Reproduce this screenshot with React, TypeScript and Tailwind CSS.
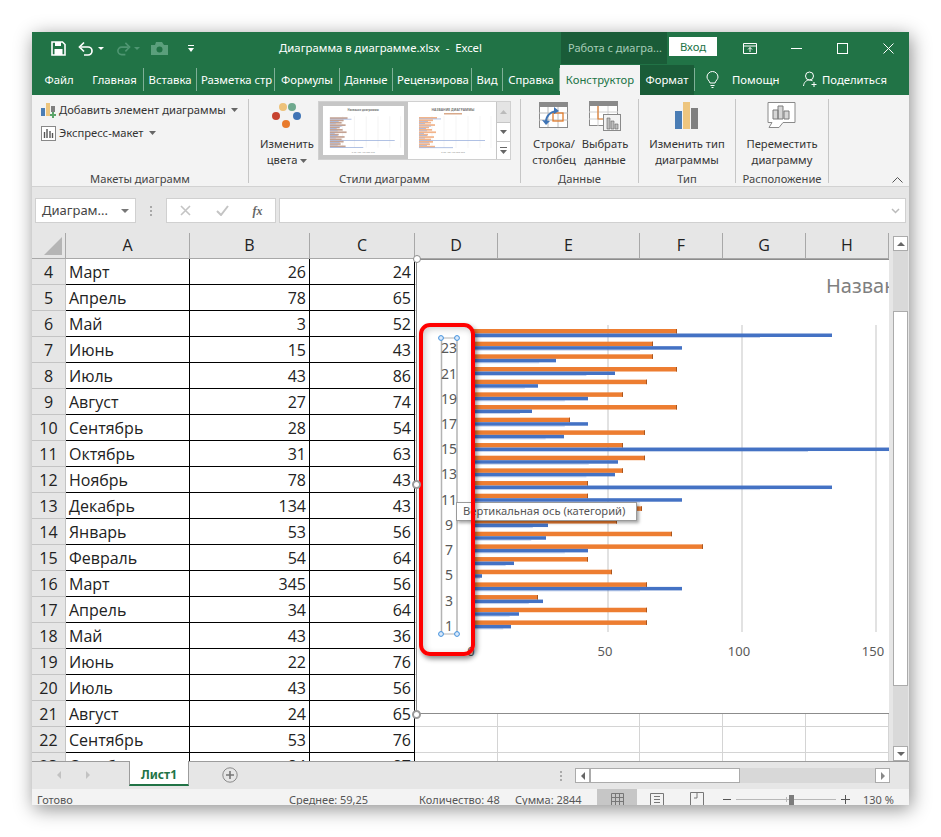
import type { ReactNode } from 'react';

const UI = "font-['Noto_Sans','Open_Sans',sans-serif]";

const tabs = [
  { label: 'Файл', cls: 'w-[54px]' },
  { label: 'Главная', cls: 'w-[58px] border-r' },
  { label: 'Вставка', cls: 'w-[53px] border-r' },
  { label: 'Разметка стр', cls: 'w-[78px] border-r' },
  { label: 'Формулы', cls: 'w-[65px] border-r' },
  { label: 'Данные', cls: 'w-[53px] border-r' },
  { label: 'Рецензирова', cls: 'w-[79px] border-r' },
  { label: 'Вид', cls: 'w-[31px] border-r' },
  { label: 'Справка', cls: 'w-[57px] border-r' },
];

const rows: [number, string, number, number][] = [
  [4, 'Март', 26, 24],
  [5, 'Апрель', 78, 65],
  [6, 'Май', 3, 52],
  [7, 'Июнь', 15, 43],
  [8, 'Июль', 43, 86],
  [9, 'Август', 27, 74],
  [10, 'Сентябрь', 28, 54],
  [11, 'Октябрь', 31, 63],
  [12, 'Ноябрь', 78, 43],
  [13, 'Декабрь', 134, 43],
  [14, 'Январь', 53, 56],
  [15, 'Февраль', 54, 64],
  [16, 'Март', 345, 56],
  [17, 'Апрель', 34, 64],
  [18, 'Май', 43, 36],
  [19, 'Июнь', 22, 76],
  [20, 'Июль', 43, 56],
  [21, 'Август', 24, 65],
  [22, 'Сентябрь', 53, 76],
  [23, 'Октябрь', 84, 87],
];

// bar ends in page px, top category first: [orange, blue]
const bars: [number, number][] = [
  [677, 832], [653, 682], [653, 556], [677, 615], [647, 538], [623, 588],
  [677, 532], [570, 588], [645, 564], [623, 892], [645, 618], [623, 615],
  [588, 832], [588, 682], [642, 560], [617, 548], [672, 546], [703, 588],
  [588, 514], [612, 482], [647, 682], [538, 543], [647, 519], [647, 511],
];

const axisLabels: [string, number][] = [
  ['23', 353], ['21', 379], ['19', 404], ['17', 429], ['15', 454], ['13', 479],
  ['11', 505], ['9', 530], ['7', 555], ['5', 580], ['3', 606], ['1', 631],
];

function Caret({ className = '' }: { className?: string }) {
  return (
    <svg className={`inline-block w-[7px] h-[4px] ${className}`} viewBox="0 0 7 4">
      <path d="M0 0h7L3.5 4z" fill="#666" />
    </svg>
  );
}

function Group({ cls, label, children }: { cls: string; label: string; children: ReactNode }) {
  return (
    <div className={`${cls} h-[84px] shrink-0 flex flex-col border-r border-[#c6c6c6]`}>
      <div className="flex-1 min-h-0 flex">{children}</div>
      <div className="h-[15px] -mb-[3px] text-center text-[11.2px] leading-[15px] text-[#444] whitespace-nowrap">{label}</div>
    </div>
  );
}

function BigButton({ cls, icon, lines }: { cls: string; icon: ReactNode; lines: ReactNode[] }) {
  return (
    <div className={`${cls} flex flex-col items-center`}>
      <div className="h-[33px] flex items-center justify-center">{icon}</div>
      <div className="mt-[4px] text-center text-[11.2px] leading-[16px] text-[#333] whitespace-nowrap">
        {lines.map((l, i) => (
          <div key={i}>{l}</div>
        ))}
      </div>
    </div>
  );
}

function MiniChart({ legend }: { legend: boolean }) {
  const ys = Array.from({ length: 13 }, (_, i) => i);
  const o = [18, 14, 12, 16, 10, 13, 17, 9, 15, 12, 14, 11, 16];
  const b = [22, 9, 6, 12, 7, 8, 5, 8, 6, 66, 10, 8, 34];
  return (
    <svg width="82" height="50" viewBox="0 0 82 50">
      <rect width="82" height="50" fill="#fff" />
      <text x="41" y="5" fontSize={legend ? 3.4 : 2.8} textAnchor="middle" fontWeight="700" fill="#777">
        {legend ? 'НАЗВАНИЕ ДИАГРАММЫ' : 'Название диаграммы'}
      </text>
      {legend && <rect x="32" y="7" width="18" height="1.5" fill="#d9a98a" />}
      {[20, 32, 44, 56, 68, 79].map((x) => (
        <line key={x} x1={x} x2={x} y1="10" y2="42" stroke="#e8e8e8" strokeWidth="0.5" />
      ))}
      {ys.map((i) => (
        <g key={i}>
          <rect x="7" y={11 + i * 2.4} width={o[i]} height="1.7" fill={legend ? '#f2b48a' : '#c4a292'} />
          <rect x="7" y={12.6 + i * 2.4} width={b[i]} height="0.7" fill="#8ea6d8" />
        </g>
      ))}
      <text x="41" y="47" fontSize="2.4" textAnchor="middle" fill="#999">
        0 50 100 150 200 250
      </text>
    </svg>
  );
}

function Ribbon() {
  return (
    <div className="h-[92px] shrink-0 bg-[#f3f3f3] border-b border-[#d2d2d2] pt-[4px] flex relative">
      <Group cls="w-[217px]" label="Макеты диаграмм">
        <div className="pl-[9px] text-[11.2px] text-[#333]">
          <div className="h-[22px] flex items-center gap-[3px]">
            <svg width="15" height="15" viewBox="0 0 15 15">
              <rect x="0" y="5" width="4" height="8" fill="#4a7db5" />
              <rect x="5" y="0" width="4" height="13" fill="#ecc57e" />
              <rect x="10" y="3" width="4" height="6" fill="#7f7f7f" />
              <path d="M11 9h2v2h2v2h-2v2h-2v-2H9v-2h2z" fill="#5aa469" />
            </svg>
            <span>Добавить элемент диаграммы</span>
            <Caret className="ml-[2px]" />
          </div>
          <div className="h-[24px] flex items-center gap-[3px]">
            <svg width="15" height="15" viewBox="0 0 15 15">
              <rect x="0.5" y="0.5" width="14" height="14" fill="#fff" stroke="#888" />
              <path d="M3.5 12V6M6 12V3M9 12V5M11.5 12V7" stroke="#555" strokeWidth="1.4" />
            </svg>
            <span>Экспресс-макет</span>
            <Caret className="ml-[2px]" />
          </div>
        </div>
      </Group>
      <Group cls="w-[272px]" label="Стили диаграмм">
        <BigButton
          cls="w-[69px] pl-[7px]"
          icon={
            <svg width="30" height="28" viewBox="0 0 30 28">
              <circle cx="11" cy="5" r="4" fill="#edc27a" />
              <circle cx="20" cy="5" r="4" fill="#6fa98e" />
              <circle cx="4" cy="14" r="4" fill="#c7432f" />
              <circle cx="25" cy="14" r="4" fill="#3f74b5" />
              <circle cx="14" cy="22" r="4" fill="#e87a2c" />
            </svg>
          }
          lines={[
            'Изменить',
            <span key="c">
              цвета <Caret />
            </span>,
          ]}
        />
        <div className="w-[193px] h-[59px] mt-[2px] bg-white border border-[#d0d0d0] flex">
          <div className="w-[89px] h-[57px] border-[4px] border-[#c6c6c6] overflow-hidden flex items-center justify-center">
            <MiniChart legend={false} />
          </div>
          <div className="w-[86px] ml-[3px] h-[57px] overflow-hidden flex items-center justify-center">
            <MiniChart legend={true} />
          </div>
          <div className="w-[14px] ml-auto flex flex-col border-l border-[#c6c6c6] bg-white">
            <div className="h-[21px] bg-[#e4e4e4] border-b border-[#c6c6c6] flex items-center justify-center">
              <svg width="7" height="4" viewBox="0 0 7 4"><path d="M0 4h7L3.5 0z" fill="#bbb" /></svg>
            </div>
            <div className="h-[19px] border-b border-[#c6c6c6] flex items-center justify-center">
              <Caret />
            </div>
            <div className="flex-1 flex flex-col items-center justify-center gap-[2px]">
              <div className="w-[7px] h-px bg-[#666]" />
              <Caret />
            </div>
          </div>
        </div>
      </Group>
      <Group cls="w-[118px]" label="Данные">
        <BigButton
          cls="w-[63px] pl-[3px]"
          icon={
            <svg width="30" height="28" viewBox="0 0 30 28">
              <rect x="0.5" y="0.5" width="28" height="25" fill="#fff" stroke="#8a8a8a" />
              <rect x="0" y="0" width="29" height="5" fill="#8a8a8a" />
              <path d="M0 11h29M0 18h29M9 5v20M19 5v20" stroke="#bcbcbc" />
              <rect x="14" y="11" width="10" height="8" fill="none" stroke="#e07b2b" strokeWidth="1.3" />
              <path d="M7 20c0-6 4-10 10-11" fill="none" stroke="#3f74b5" strokeWidth="2" />
              <path d="M15 5l5 4-5 3zM3 18l4 5 4-4z" fill="#3f74b5" />
            </svg>
          }
          lines={['Строка/', 'столбец']}
        />
        <BigButton
          cls="w-[42px]"
          icon={
            <svg width="32" height="30" viewBox="0 0 32 30">
              <rect x="0.5" y="0.5" width="28" height="24" fill="#fff" stroke="#8a8a8a" />
              <rect x="0" y="0" width="29" height="5" fill="#8a8a8a" />
              <path d="M0 11h29M0 18h29M9 5v20M19 5v20" stroke="#d0d0d0" />
              <path d="M9 5v13h10" fill="none" stroke="#e07b2b" strokeWidth="1.2" />
              <rect x="14.5" y="13.5" width="17" height="16" fill="#f3f3f3" stroke="#8a8a8a" />
              <path d="M18 17v11h3V17zM22 20v8h3v-8zM26 23v5h3v-5z" fill="#bdbdbd" stroke="#666" strokeWidth="0.6" />
            </svg>
          }
          lines={['Выбрать', 'данные']}
        />
      </Group>
      <Group cls="w-[97px]" label="Тип">
        <BigButton
          cls="w-full"
          icon={
            <svg width="24" height="28" viewBox="0 0 24 28">
              <rect x="0" y="9" width="7" height="18" fill="#4a7db5" />
              <rect x="8" y="0" width="7" height="27" fill="#edc57e" />
              <rect x="16" y="6" width="7" height="21" fill="#7f7f7f" />
            </svg>
          }
          lines={['Изменить тип', 'диаграммы']}
        />
      </Group>
      <Group cls="w-[93px]" label="Расположение">
        <BigButton
          cls="w-full"
          icon={
            <svg width="30" height="27" viewBox="0 0 30 27">
              <path d="M1 .5h27v20H16l-4 5H2l3-5H1z" fill="#fff" stroke="#8a8a8a" />
              <path d="M6 17V8h5v9zM11 17V4h5v13zM17 17V9h5v8z" fill="#d6d6d6" stroke="#7a7a7a" />
            </svg>
          }
          lines={['Переместить', 'диаграмму']}
        />
      </Group>
      <svg className="absolute right-[6px] bottom-[3px]" width="11" height="6" viewBox="0 0 11 6">
        <path d="M.5 5.5l5-5 5 5" fill="none" stroke="#555" />
      </svg>
    </div>
  );
}

function FormulaBar() {
  return (
    <div className="h-[46px] shrink-0 bg-[#e6e6e6] pt-[11px] flex items-start">
      <div className="ml-[3px] w-[101px] h-[25px] bg-white border border-[#d0d0d0] flex items-center pl-[6px] text-[13px] text-[#444]">
        <span>Диаграм...</span>
        <svg className="ml-auto mr-[6px]" width="8" height="4" viewBox="0 0 8 4"><path d="M0 0h8L4 4z" fill="#777" /></svg>
      </div>
      <div className="w-[30px] h-[25px] flex flex-col items-center justify-center gap-[2px]">
        <div className="w-[2px] h-[2px] bg-[#a8a8a8]" />
        <div className="w-[2px] h-[2px] bg-[#a8a8a8]" />
        <div className="w-[2px] h-[2px] bg-[#a8a8a8]" />
      </div>
      <div className="w-[110px] h-[25px] bg-white border border-[#d0d0d0] flex items-center">
        <div className="w-[37px] flex justify-center">
          <svg width="11" height="11" viewBox="0 0 11 11"><path d="M1 1l9 9M10 1l-9 9" stroke="#c4c4c4" strokeWidth="1.6" /></svg>
        </div>
        <div className="w-[36px] flex justify-center">
          <svg width="13" height="11" viewBox="0 0 13 11"><path d="M1 6l4 4 7-9" fill="none" stroke="#c4c4c4" strokeWidth="2" /></svg>
        </div>
        <div className="w-[35px] text-center text-[12px] italic font-bold text-[#666] font-['Liberation_Serif',serif]">fx</div>
      </div>
      <div className="ml-[3px] w-[627px] h-[25px] bg-white border border-[#d0d0d0] flex items-center justify-end pr-[5px]">
        <svg width="9" height="6" viewBox="0 0 9 6"><path d="M1 1l3.500 3.500L8 1" fill="none" stroke="#bbb" strokeWidth="1.5" /></svg>
      </div>
    </div>
  );
}

function Chart() {
  return (
    <div className="absolute left-[384px] top-[26px] w-[473px] h-[455px] bg-white">
      <svg className="block" width="473" height="455" viewBox="416 259 473 455">
        <rect x="416.5" y="259.5" width="480" height="454" fill="#fff" stroke="#8c8c8c" />
        <text x="826" y="293" fontSize="20" fill="#7f7f7f">
          Название
        </text>
        {[608, 742, 876].map((x) => (
          <line key={x} x1={x} x2={x} y1="325" y2="632" stroke="#d9d9d9" strokeWidth="1.5" />
        ))}
        {bars.map(([o, b], i) => (
          <g key={i}>
            <rect x="472" y={329 + i * 12.67} width={o - 472} height="4.5" fill="#ed7d31" />
            <rect x={o - 1} y={329 + i * 12.67} width="1" height="4.5" fill="#a9561f" />
            <rect x="472" y={333.5 + i * 12.67} width={b - 472} height="3.5" fill="#4472c4" />
            <rect x="472" y={337 + i * 12.67} width={(b - 472) * 0.8} height="1" fill="#4472c4" opacity="0.3" />
          </g>
        ))}
        <line x1="441.5" x2="441.5" y1="338" y2="634" stroke="#b3b3b3" strokeWidth="1.5" />
        <line x1="457" x2="457" y1="338" y2="634" stroke="#b3b3b3" strokeWidth="1.5" />
        <line x1="441" x2="457" y1="338" y2="338" stroke="#b3b3b3" />
        <line x1="441" x2="457" y1="634" y2="634" stroke="#b3b3b3" />
        {axisLabels.map(([t, y]) => (
          <text key={t} x="449" y={y} fontSize="14" textAnchor="middle" fill="#595959">
            {t}
          </text>
        ))}
        {[[441, 338], [457, 338], [441, 634], [457, 634]].map(([x, y]) => (
          <circle key={`${x}-${y}`} cx={x} cy={y} r="2.4" fill="#dbeafb" stroke="#3f8fdc" strokeWidth="1" />
        ))}
        <text x="471" y="656" fontSize="13" textAnchor="middle" fill="#595959">0</text>
        <text x="605" y="656" fontSize="13" textAnchor="middle" fill="#595959">50</text>
        <text x="739" y="656" fontSize="13" textAnchor="middle" fill="#595959">100</text>
        <text x="873" y="656" fontSize="13" textAnchor="middle" fill="#595959">150</text>
      </svg>
      <div className="absolute left-[40px] top-[243px] w-[181px] h-[19px] bg-white border border-[#9a9a9a] shadow-[2px_2px_3px_rgba(0,0,0,0.35)] flex items-center pl-[6px] text-[11.2px] text-[#555] whitespace-nowrap">
        Вертикальная ось (категорий)
      </div>
      {/* red callout over the axis, sits above the tooltip */}
      <div className="absolute left-[3px] top-[64px] w-[56px] h-[333px] border-[4px] border-[#f00] rounded-[11px] shadow-[2px_3px_5px_rgba(0,0,0,0.45),inset_2px_2px_6px_rgba(0,0,0,0.2)]" />
    </div>
  );
}

function Sheet() {
  const headers = ['A', 'B', 'C', 'D', 'E', 'F', 'G', 'H'];
  return (
    <div className="flex-1 min-h-0 flex bg-[#e6e6e6]">
      <div className="w-[857px] relative overflow-hidden bg-white">
        <div className="grid grid-cols-[34px_124px_120px_105px_83px_142px_83px_83px_83px] auto-rows-[26px] font-['Open_Sans',sans-serif] text-[16px] leading-[27px] text-[#222]">
          <div className="bg-[#e6e6e6] border-r border-b border-[#a8a8a8] flex items-end justify-end pr-[3px] pb-[3px]">
            <svg width="18" height="18" viewBox="0 0 18 18"><path d="M18 0v18H0z" fill="#b5b5b5" /></svg>
          </div>
          {headers.map((h) => (
            <div key={h} className="bg-[#e6e6e6] border-r border-b border-[#a8a8a8] text-center leading-[25px]">
              {h}
            </div>
          ))}
          {rows.map(([n, name, b, c]) => (
            <div key={n} className="contents">
              <div className="bg-[#e6e6e6] border-r border-b border-[#c4c4c4] text-center">{n}</div>
              <div className="border-r border-b border-black pl-[3px]">{name}</div>
              <div className="border-r border-b border-black text-right pr-[3px]">{b}</div>
              <div className="border-r border-b border-black text-right pr-[3px]">{c}</div>
              <div className="border-r border-b border-[#d4d4d4]" />
              <div className="border-r border-b border-[#d4d4d4]" />
              <div className="border-r border-b border-[#d4d4d4]" />
              <div className="border-r border-b border-[#d4d4d4]" />
              <div className="border-r border-b border-[#d4d4d4]" />
            </div>
          ))}
        </div>
        <Chart />
        <div className="absolute left-[381px] top-[22px] w-[8px] h-[8px] rounded-full bg-white border border-[#8c8c8c]" />
        <div className="absolute left-[380px] top-[247px] w-[9px] h-[9px] rounded-full bg-white border-2 border-[#9a9a9a]" />
        <div className="absolute left-[380px] top-[477px] w-[9px] h-[9px] rounded-full bg-white border-2 border-[#9a9a9a]" />
      </div>
      <div className="w-[20px] pl-[4px] pr-[1px] pt-[3px]">
        <div className="h-full bg-[#d9d9d9] flex flex-col">
          <div className="h-[15px] bg-white border border-[#ababab] flex items-center justify-center">
            <svg width="8" height="4" viewBox="0 0 8 4"><path d="M0 4h8L4 0z" fill="#666" /></svg>
          </div>
          <div className="mt-[60px] h-[375px] bg-white border border-[#ababab]" />
          <div className="flex-1" />
          <div className="h-[15px] bg-white border border-[#ababab] flex items-center justify-center">
            <svg width="8" height="4" viewBox="0 0 8 4"><path d="M0 0h8L4 4z" fill="#666" /></svg>
          </div>
        </div>
      </div>
    </div>
  );
}

function TabBar() {
  return (
    <div className="h-[28px] shrink-0 bg-[#e6e6e6] border-t border-[#9c9c9c] flex items-start relative">
      <div className="w-[97px] h-[26px] flex items-center gap-[25px] pl-[25px]">
        <svg width="4" height="8" viewBox="0 0 4 8"><path d="M4 0v8L0 4z" fill="#c2c2c2" /></svg>
        <svg width="4" height="8" viewBox="0 0 4 8"><path d="M0 0v8l4-4z" fill="#c2c2c2" /></svg>
      </div>
      <div className="w-[60px] h-[25px] -mt-px bg-white border-x border-[#9c9c9c] border-b-[2px] border-b-[#217346] text-center text-[12px] leading-[27px] font-bold text-[#217346]">
        Лист1
      </div>
      <div className="ml-[33px] mt-[5px]">
        <svg width="16" height="16" viewBox="0 0 16 16">
          <circle cx="8" cy="8" r="7.2" fill="none" stroke="#8a8a8a" />
          <path d="M8 4v8M4 8h8" stroke="#777" strokeWidth="1.6" />
        </svg>
      </div>
      <div className="ml-auto mr-[19px] mt-[6px] flex items-center gap-[13px]">
        <div className="flex flex-col gap-[2px]">
          <div className="w-[2px] h-[2px] bg-[#aaa]" />
          <div className="w-[2px] h-[2px] bg-[#aaa]" />
          <div className="w-[2px] h-[2px] bg-[#aaa]" />
        </div>
        <div className="w-[315px] h-[15px] bg-[#d8d8d8] flex">
          <div className="w-[15px] bg-white border border-[#ababab] flex items-center justify-center">
            <svg width="4" height="8" viewBox="0 0 4 8"><path d="M4 0v8L0 4z" fill="#666" /></svg>
          </div>
          <div className="w-[150px] bg-white border border-[#ababab]" />
          <div className="flex-1" />
          <div className="w-[15px] bg-white border border-[#ababab] flex items-center justify-center">
            <svg width="4" height="8" viewBox="0 0 4 8"><path d="M0 0v8l4-4z" fill="#888" /></svg>
          </div>
        </div>
      </div>
    </div>
  );
}

function StatusBar() {
  return (
    <div className="h-[16px] shrink-0 bg-[#f3f3f3] flex items-start text-[11px] leading-[16px] text-[#555] whitespace-nowrap overflow-hidden">
      <span className="mt-[3px] ml-[5px] w-[252px]">Готово</span>
      <span className="mt-[3px] w-[130px]">Среднее: 59,25</span>
      <span className="mt-[3px] w-[96px]">Количество: 48</span>
      <span className="mt-[3px] w-[82px]">Сумма: 2844</span>
      <div className="w-[40px] h-[16px] bg-[#c6c6c6] flex justify-center pt-[4px]">
        <svg width="13" height="13" viewBox="0 0 13 13">
          <path d="M.5.5h12v12H.5zM4.5.5v12M8.5.5v12M.5 4.500h12M.5 8.500h12" fill="none" stroke="#777" />
        </svg>
      </div>
      <div className="w-[40px] flex justify-center pt-[4px]">
        <svg width="14" height="13" viewBox="0 0 14 13">
          <path d="M.5.5h13v12H.5zM4 3.500h6M4 6.500h6M4 9.500h6" fill="none" stroke="#777" />
        </svg>
      </div>
      <div className="w-[40px] flex justify-center pt-[3px]">
        <svg width="14" height="13" viewBox="0 0 14 13">
          <path d="M.5 13V.5h13V13M7 .5V6H4" fill="none" stroke="#777" />
        </svg>
      </div>
      <svg className="ml-[6px] mt-[10px]" width="8" height="1" viewBox="0 0 8 1"><rect width="8" height="1" fill="#555" /></svg>
      <div className="ml-[5px] w-[100px] h-[16px] relative">
        <div className="absolute left-0 top-[10px] w-full h-px bg-[#b8b8b8]" />
        <div className="absolute left-[50px] top-[8px] w-px h-[5px] bg-[#b8b8b8]" />
        <div className="absolute left-[53px] top-[6px] w-[5px] h-[10px] bg-[#7c7c7c]" />
      </div>
      <svg className="ml-[5px] mt-[6px]" width="9" height="9" viewBox="0 0 9 9"><path d="M4.500 0v9M0 4.500h9" stroke="#555" /></svg>
      <span className="mt-[3px] ml-[13px]">130 %</span>
    </div>
  );
}

export default function App() {
  return (
    <div className={`w-[941px] h-[837px] bg-white pt-[32px] pl-[32px] ${UI}`}>
      <div className="w-[877px] h-[773px] flex flex-col shadow-[2px_4px_18px_rgba(0,0,0,0.45)] bg-[#217346]">
        {/* title bar */}
        <div className="h-[32px] shrink-0 flex items-center text-white">
          <div className="w-[229px] flex items-center pl-[19px]">
            <svg width="15" height="15" viewBox="0 0 15 15">
              <path d="M1 1h10.500L14 3.500V14H1z" fill="none" stroke="#fff" strokeWidth="1.6" />
              <rect x="4" y="1" width="6" height="4" fill="#fff" />
              <rect x="3.5" y="8" width="8" height="6" fill="#fff" />
            </svg>
            <svg className="ml-[12px]" width="16" height="15" viewBox="0 0 16 15">
              <path d="M3 6h7a4 4 0 0 1 0 8H6" fill="none" stroke="#fff" strokeWidth="1.7" />
              <path d="M6 1.500L1.500 6 6 10.500" fill="none" stroke="#fff" strokeWidth="1.7" />
            </svg>
            <svg className="ml-[4px]" width="6" height="3" viewBox="0 0 6 3"><path d="M0 0h6L3 3z" fill="#fff" /></svg>
            <svg className="ml-[12px]" width="15" height="15" viewBox="0 0 16 15">
              <path d="M13 6H6a4 4 0 0 0 0 8h4" fill="none" stroke="#4f9672" strokeWidth="1.7" />
              <path d="M10 1.500L14.500 6 10 10.500" fill="none" stroke="#4f9672" strokeWidth="1.7" />
            </svg>
            <svg className="ml-[3px]" width="6" height="3" viewBox="0 0 6 3"><path d="M0 0h6L3 3z" fill="#4f9672" /></svg>
            <svg className="ml-[11px]" width="17" height="13" viewBox="0 0 17 13">
              <path d="M0 3h4l1-3h6l2 3h4v10H0z" fill="#5b9f7c" />
              <circle cx="8.5" cy="7.5" r="3" fill="#217346" />
            </svg>
            <svg className="ml-[20px]" width="6" height="7" viewBox="0 0 6 7"><path d="M0 0h6v1H0zM0 3h6L3 7z" fill="#fff" /></svg>
          </div>
          <div className="w-[239px] text-center text-[11.3px] whitespace-nowrap">Диаграмма в диаграмме.xlsx&nbsp; -&nbsp; Excel</div>
          <div className="w-[61px]" />
          <div className="w-[106px] h-[32px] bg-[#1a5c38] text-[#a8cdb8] text-[11px] leading-[32px] pl-[7px] whitespace-nowrap overflow-hidden">Работа с диагра...</div>
          <div className="ml-[2px] mb-[3px] w-[48px] h-[19px] bg-white text-[#217346] text-[11.3px] leading-[19px] text-center">Вход</div>
          <div className="w-[65px] flex justify-center">
            <svg width="14" height="11" viewBox="0 0 14 11">
              <path d="M.5.5h13v10H.5zM.5 3h13M7 9V4.500M5 6.500l2-2 2 2" fill="none" stroke="#fff" />
            </svg>
          </div>
          <div className="w-[28px] flex justify-center">
            <div className="w-[11px] h-px bg-white" />
          </div>
          <div className="w-[64px] flex justify-center">
            <div className="w-[11px] h-[11px] border border-white" />
          </div>
          <div className="w-[28px] flex justify-center">
            <svg width="11" height="11" viewBox="0 0 11 11"><path d="M.5.5l10 10M10.500.5l-10 10" stroke="#fff" /></svg>
          </div>
        </div>
        {/* tabs */}
        <div className="h-[31px] shrink-0 flex text-white text-[11.3px] whitespace-nowrap">
          {tabs.map((t) => (
            <div key={t.label} className={`${t.cls} mt-[4px] h-[23px] leading-[24px] text-center overflow-hidden px-[4px] border-[#7fb097]`}>
              {t.label}
            </div>
          ))}
          <div className="w-[80px] h-[30px] mt-[1px] bg-[#f3f3f3] text-[#217346] text-center leading-[29px]">Конструктор</div>
          <div className="w-[54px] h-[30px] mt-[1px] bg-[#1a5c38] text-center leading-[29px]">Формат</div>
          <div className="mt-[4px] h-[23px] border-l border-[#7fb097]" />
          <div className="w-[33px] flex items-center justify-center pl-[2px]">
            <svg width="13" height="17" viewBox="0 0 13 17">
              <path d="M4 12C3 9 1 8.500 1 6a5.500 5.500 0 0 1 11 0c0 2.500-2 3-3 6zM4.500 14.500h4M5.500 16.500h2" fill="none" stroke="#fff" />
            </svg>
          </div>
          <div className="w-[75px] leading-[31px] pl-[4px]">Помощн</div>
          <svg className="mt-[7px]" width="15" height="17" viewBox="0 0 15 17">
            <circle cx="6.500" cy="5" r="4" fill="none" stroke="#fff" />
            <path d="M.5 15c.5-4 3-6 6-6 1 0 2 .2 3 .8M11 11v5M8.500 13.500h5" fill="none" stroke="#fff" />
          </svg>
          <div className="leading-[31px] pl-[4px]">Поделиться</div>
        </div>
        <Ribbon />
        <FormulaBar />
        <Sheet />
        <TabBar />
        <StatusBar />
      </div>
    </div>
  );
}
